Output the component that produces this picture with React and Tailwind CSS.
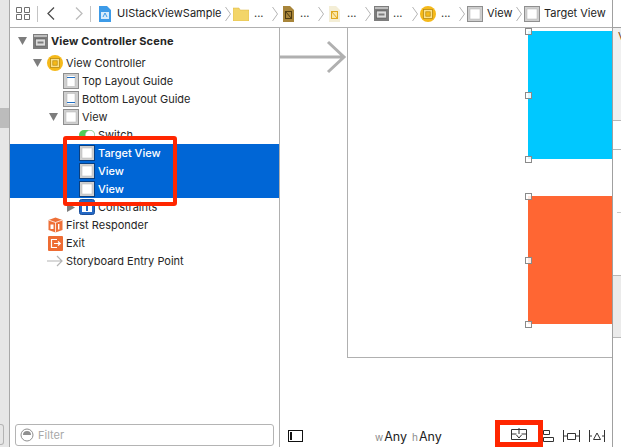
const font = { fontFamily: 'Inter, "Liberation Sans", sans-serif' };

function ViewIcon({ dark }) {
  return (
    <svg width="16" height="16" viewBox="0 0 16 16" className="shrink-0">
      <rect x="0.5" y="0.5" width="15" height="15" fill="#cfcfcf" stroke={dark ? '#0a3f80' : '#8f8f8f'} />
      <rect x="3" y="3" width="10" height="10" fill="#fff" stroke="#b5b5b5" strokeWidth="0.5" />
    </svg>
  );
}

function GuideIcon({ bottom }) {
  return (
    <svg width="16" height="16" viewBox="0 0 16 16" className="shrink-0">
      <rect x="0.5" y="0.5" width="15" height="15" fill="#cfcfcf" stroke="#8f8f8f" />
      <rect x="4" y="2.5" width="8" height="11" fill="#fff" stroke="#b5b5b5" strokeWidth="0.5" />
      <rect x="4" y={bottom ? 11 : 4} width="8" height="1" fill="#1f6fc4" />
    </svg>
  );
}

function VcIcon({ size = 16 }) {
  return (
    <svg width={size} height={size} viewBox="0 0 16 16" className="shrink-0">
      <circle cx="8" cy="8" r="8" fill="#f5b91a" />
      <rect x="3.5" y="3.5" width="9" height="9" fill="#fbe08a" stroke="#b98a10" strokeWidth="0.8" />
      <rect x="5.8" y="5.8" width="4.4" height="4.4" fill="#f5b91a" stroke="#b98a10" strokeWidth="0.7" />
    </svg>
  );
}

function SceneIcon() {
  return (
    <svg width="15" height="15" viewBox="0 0 15 15" className="shrink-0">
      <rect x="0" y="0" width="15" height="15" fill="#7d7d7d" />
      <rect x="1" y="1" width="13" height="2" fill="#bdbdbd" />
      <rect x="2.5" y="5" width="10" height="7" fill="#dcdcdc" stroke="#555" strokeWidth="0.6" />
      <rect x="4.5" y="7.5" width="6" height="2" fill="#7d7d7d" />
    </svg>
  );
}

function SwitchIcon() {
  return (
    <svg width="16" height="16" viewBox="0 0 16 16" className="shrink-0">
      <rect x="0" y="3" width="16" height="10" rx="5" fill="#4fce5a" />
      <circle cx="11" cy="8" r="4.6" fill="#fff" stroke="#bbb" strokeWidth="0.4" />
    </svg>
  );
}

function ConstraintsIcon() {
  return (
    <svg width="16" height="16" viewBox="0 0 16 16" className="shrink-0">
      <rect x="0.5" y="0.5" width="15" height="15" rx="2" fill="#2468c4" stroke="#1a4f9c" />
      <rect x="3" y="5" width="10" height="8" fill="#fff" />
      <rect x="7" y="6" width="2" height="6" fill="#2468c4" />
    </svg>
  );
}

function ResponderIcon() {
  return (
    <svg width="15" height="16" viewBox="0 0 15 16" className="shrink-0">
      <path d="M7.5 0.5 L14.5 3 V13 L7.5 15.5 L0.5 13 V3 Z" fill="#ee7038" />
      <path d="M0.5 3 L7.5 5.5 L14.5 3 M7.5 5.5 V15.5" stroke="#fff" strokeWidth="0.8" fill="none" />
      <rect x="2.5" y="7.5" width="3" height="4.5" fill="#fff" />
      <rect x="10" y="7" width="1.4" height="5.5" fill="#fff" />
    </svg>
  );
}

function ExitIcon() {
  return (
    <svg width="15" height="15" viewBox="0 0 15 15" className="shrink-0">
      <rect width="15" height="15" rx="1" fill="#ee6c33" />
      <path d="M9 3.5 H3.5 V11.5 H9" stroke="#fff" strokeWidth="1.2" fill="none" />
      <path d="M6 7.5 H12 M10 5.5 L12.2 7.5 L10 9.5" stroke="#fff" strokeWidth="1.2" fill="none" />
    </svg>
  );
}

function EntryIcon() {
  return (
    <svg width="16" height="12" viewBox="0 0 16 12" className="shrink-0">
      <path d="M0 6 H15 M10 1 L15 6 L10 11" stroke="#b4b4b4" strokeWidth="1.2" fill="none" />
    </svg>
  );
}

function Tri({ dir }) {
  return (
    <span className="w-[14px] shrink-0 flex">
      {dir === 'down' && (
        <svg width="9" height="8" viewBox="0 0 9 8">
          <path d="M0 0 H9 L4.5 8 Z" fill="#7d7d7d" />
        </svg>
      )}
      {dir === 'right' && (
        <svg width="8" height="9" viewBox="0 0 8 9" className="ml-[2px]">
          <path d="M0 0 V9 L8 4.5 Z" fill="#7d7d7d" />
        </svg>
      )}
    </span>
  );
}

function Row({ pad, tri, icon, text, bold, selected, wrap = 'w-[16px]' }) {
  return (
    <div className={`flex h-[18px] items-center ${pad} ${selected ? 'bg-[#0066d6] text-white' : 'text-[#262626]'}`}>
      <Tri dir={tri} />
      <span className={`flex justify-center mr-[3px] ${wrap}`}>{icon}</span>
      <span className={`text-[11px] whitespace-nowrap ${bold ? 'font-bold tracking-[0.15px]' : ''} ${selected ? 'font-medium' : ''}`}>{text}</span>
    </div>
  );
}

function Sep() {
  return (
    <svg width="6" height="16" viewBox="0 0 6 16" className="shrink-0">
      <path d="M0.5 1 L5.5 8 L0.5 15" stroke="#b5b5b5" fill="none" />
    </svg>
  );
}

function Dots({ className }) {
  return <span className={`text-[11px] leading-none text-[#333] ${className}`}>...</span>;
}

function FileIcon({ tone }) {
  const brown = tone === 'brown';
  return (
    <svg width="11" height="16" viewBox="0 0 11 16" className="shrink-0">
      <path d="M0 0 H7 L11 4 V16 H0 Z" fill={brown ? '#a8853a' : '#f4eed6'} />
      <rect x="2.5" y="5.5" width="6" height="7" fill={brown ? 'none' : '#fbe6a4'} stroke={brown ? '#4d3a10' : '#e0a820'} />
      <path d="M2.5 5.5 L8.5 12.5" stroke={brown ? '#4d3a10' : '#e0a820'} />
    </svg>
  );
}

function TopBar() {
  return (
    <div className="flex h-[28px] border-b border-[#b0b0b0] bg-white">
      <div className="flex flex-1 items-center pl-[6px] whitespace-nowrap">
        <svg width="14" height="13" viewBox="0 0 14 13" className="shrink-0">
          <path d="M0.5 0.5 H5.5 V5.5 H0.5 Z M8.5 0.5 H13.5 V5.5 H8.5 Z M0.5 7.5 H5.5 V12.5 H0.5 Z M8.5 7.5 H13.5 V12.5 H8.5 Z" stroke="#707070" fill="none" />
        </svg>
        <span className="ml-[7px] h-[16px] w-px bg-[#c4c4c4]" />
        <svg width="8" height="13" viewBox="0 0 8 13" className="ml-[9px] shrink-0">
          <path d="M7 0.5 L1 6.5 L7 12.5" stroke="#4d4d4d" strokeWidth="1.3" fill="none" />
        </svg>
        <svg width="8" height="13" viewBox="0 0 8 13" className="ml-[20px] shrink-0">
          <path d="M1 0.5 L7 6.5 L1 12.5" stroke="#bdbdbd" strokeWidth="1.3" fill="none" />
        </svg>
        <span className="ml-[7px] h-[16px] w-px bg-[#c4c4c4]" />
        <svg width="12" height="16" viewBox="0 0 12 16" className="ml-[8px] shrink-0">
          <path d="M0 0 H8 L12 4 V16 H0 Z" fill="#3d9be8" />
          <rect x="2" y="6" width="8" height="7" fill="#d7ebfb" />
          <path d="M4 11 L6 7 L8 11" stroke="#3d9be8" fill="none" />
        </svg>
        <span className="ml-[6px] w-[104px] text-[11px] text-[#222]">UIStackViewSample</span>
        <span className="ml-[4px] flex"><Sep /></span>
        <svg width="16" height="14" viewBox="0 0 16 14" className="ml-[2px] shrink-0">
          <path d="M0 1 H6 L7 3 H16 V14 H0 Z" fill="#f3d568" stroke="#d8b440" strokeWidth="0.5" />
        </svg>
        <Dots className="ml-[5px] w-[18px]" />
        <Sep />
        <span className="ml-[5px] flex"><FileIcon tone="brown" /></span>
        <Dots className="ml-[6px] w-[18px]" />
        <Sep />
        <span className="ml-[5px] flex"><FileIcon tone="light" /></span>
        <Dots className="ml-[7px] w-[18px]" />
        <Sep />
        <span className="ml-[3px] flex"><SceneIcon /></span>
        <Dots className="ml-[4px] w-[19px]" />
        <Sep />
        <span className="ml-[2px] flex"><VcIcon /></span>
        <Dots className="ml-[5px] w-[18px]" />
        <Sep />
        <span className="ml-[2px] flex"><ViewIcon /></span>
        <span className="ml-[4px] w-[29px] text-[11px] text-[#222]">View</span>
        <Sep />
        <span className="ml-[2px] flex"><ViewIcon /></span>
        <span className="ml-[4px] text-[11px] text-[#222]">Target View</span>
      </div>
    </div>
  );
}

function Outline() {
  return (
    <div className="relative flex w-[270px] shrink-0 flex-col border-r border-[#b0b0b0] bg-white">
      <div className="flex flex-1 flex-col pt-[4px]">
        <Row pad="pl-[8px]" tri="down" icon={<SceneIcon />} text="View Controller Scene" bold />
        <div className="mt-[4px]">
          <Row pad="pl-[23px]" tri="down" icon={<VcIcon />} text="View Controller" />
        </div>
        <Row pad="pl-[39px]" icon={<GuideIcon />} text="Top Layout Guide" />
        <Row pad="pl-[39px]" icon={<GuideIcon bottom />} text="Bottom Layout Guide" />
        <Row pad="pl-[39px]" tri="down" icon={<ViewIcon />} text="View" />
        <Row pad="pl-[55px]" icon={<SwitchIcon />} text="Switch" />
        <Row pad="pl-[55px]" icon={<ViewIcon dark />} text="Target View" selected />
        <Row pad="pl-[55px]" icon={<ViewIcon dark />} text="View" selected />
        <Row pad="pl-[55px]" icon={<ViewIcon dark />} text="View" selected />
        <Row pad="pl-[55px]" tri="right" icon={<ConstraintsIcon />} text="Constraints" />
        <Row pad="pl-[23px]" icon={<ResponderIcon />} text="First Responder" />
        <Row pad="pl-[23px]" icon={<ExitIcon />} text="Exit" />
        <Row pad="pl-[23px]" icon={<EntryIcon />} text="Storyboard Entry Point" />
      </div>
      <div className="mb-[1px] ml-[5px] flex h-[22px] w-[259px] items-center gap-[4px] rounded-[3px] border border-[#b4b4b4] bg-white pl-[4px]">
        <svg width="14" height="14" viewBox="0 0 14 14" className="shrink-0">
          <circle cx="7" cy="7" r="6" fill="#fff" stroke="#8f8f8f" />
          <path d="M3 7 A4 4 0 0 1 11 7 Z" fill="#8f8f8f" />
        </svg>
        <span className="text-[11px] text-[#a8a8a8]">Filter</span>
      </div>
      {/* red annotation over the selected rows */}
      <div className="absolute left-[53px] top-[108px] h-[70px] w-[114px] rounded-[3px] border-4 border-[#ff2600]" />
    </div>
  );
}

function Handle({ className }) {
  return <div className={`absolute h-[7px] w-[7px] border border-[#8a8a8a] bg-white/85 ${className}`} />;
}

function Canvas() {
  return (
    <div className="relative flex-1 overflow-hidden bg-white">
      <svg width="68" height="36" viewBox="0 0 68 36" className="absolute left-0 top-[11px]">
        <path d="M0 18 H64 M48 3 L64 18 L48 33" stroke="#b0b0b0" strokeWidth="3" fill="none" />
      </svg>
      <div className="absolute left-[67px] top-[-1px] h-[331px] w-[300px] border border-[#b0b0b0]" />
      <div className="absolute left-[248px] top-[3px] h-[128px] w-[84px] bg-[#00c8ff]" />
      <div className="absolute left-[248px] top-[168px] h-[128px] w-[84px] bg-[#ff6633]" />
      <Handle className="left-[245px] top-0" />
      <Handle className="left-[245px] top-[64px]" />
      <Handle className="left-[245px] top-[128px]" />
      <Handle className="left-[245px] top-[165px]" />
      <Handle className="left-[245px] top-[229px]" />
      <Handle className="left-[245px] top-[293px]" />

      <svg width="15" height="12" viewBox="0 0 15 12" className="absolute left-[8px] top-[402px]">
        <rect x="0.5" y="0.5" width="14" height="11" fill="none" stroke="#111" />
        <rect x="2" y="2" width="2" height="8" fill="#111" />
      </svg>
      <div className="absolute left-[95px] top-[400px] flex items-baseline text-[12.5px] text-[#222]">
        <span className="mr-[1px] text-[10px] text-[#8c8c8c]">w</span>
        <span>Any</span>
        <span className="ml-[5px] mr-[1px] text-[10px] text-[#8c8c8c]">h</span>
        <span>Any</span>
      </div>

      <div className="absolute left-[215px] top-[392px] flex h-[27px] w-[48px] items-center justify-center border-[5px] border-[#ff2600] bg-white">
        <svg width="16" height="12" viewBox="0 0 16 12">
          <path d="M0.5 1.5 H15.5 M0.5 11.5 H15.5 M0.5 1.5 V11.5 M15.5 1.5 V11.5 M8 0 V6 M0.5 6 H5.5 M10.5 6 H15.5" stroke="#333" fill="none" />
          <path d="M5.5 7 L8 10 L10.5 7" stroke="#333" fill="none" />
        </svg>
      </div>
      <svg width="11" height="12" viewBox="0 0 11 12" className="absolute left-[263px] top-[402px]">
        <path d="M0.5 0.5 H6.5 V4.5 H0.5 Z M0.5 7.5 H10.5 V11.5 H0.5 Z" fill="none" stroke="#333" />
      </svg>
      <svg width="17" height="12" viewBox="0 0 17 12" className="absolute left-[283px] top-[402px]">
        <path d="M0.5 0 V12 M16.5 0 V12 M0.5 6 H4 M13 6 H16.5 M4.5 3.5 H12.5 V9.5 H4.5 Z" fill="none" stroke="#333" />
      </svg>
      <svg width="16" height="12" viewBox="0 0 16 12" className="absolute left-[309px] top-[402px]">
        <path d="M0.5 0 V12 M15.5 0 V12 M0.5 6 H3 M13 6 H15.5 M8 3 L11.5 9.5 H4.5 Z" fill="none" stroke="#333" />
      </svg>
    </div>
  );
}

function RightStrip() {
  return (
    <div className="flex w-[9px] shrink-0 flex-col border-l border-[#a0a0a0] bg-white">
      <div className="h-[93px] overflow-hidden border-b border-[#b8b8b8] bg-[#f0f0f0] pl-[5px] pt-[1px] text-[11px] leading-[14px] text-[#7a4a10]">V</div>
      <div className="h-[29px] border-b border-[#b8b8b8]" />
      <div className="h-[125px] pl-[4px] pt-[62px]">
        <div className="h-px w-[4px] bg-[#c8c8c8]" />
      </div>
      <div className="h-[63px] border-y border-[#b8b8b8] bg-[#ebebeb]" />
    </div>
  );
}

export default function App() {
  return (
    <div className="flex h-[447px] w-[621px] overflow-hidden bg-white" style={font}>
      <div className="relative w-[10px] shrink-0 border-r border-[#a8a8a8] bg-[#e6e6e6]">
        <div className="absolute left-0 top-[108px] h-[20px] w-[9px] bg-[#bcbcbc]" />
        <div className="absolute left-0 top-[424px] h-[21px] w-[4px] rounded-r-[3px] border border-l-0 border-[#b4b4b4]" />
      </div>
      <div className="flex w-[602px] shrink-0 flex-col">
        <TopBar />
        <div className="flex min-h-0 flex-1">
          <Outline />
          <Canvas />
        </div>
      </div>
      <div className="flex w-[9px] shrink-0 flex-col">
        <div className="h-[28px] border-b border-l border-[#a0a0a0] bg-white" />
        <div className="flex min-h-0 flex-1"><RightStrip /></div>
      </div>
    </div>
  );
}
